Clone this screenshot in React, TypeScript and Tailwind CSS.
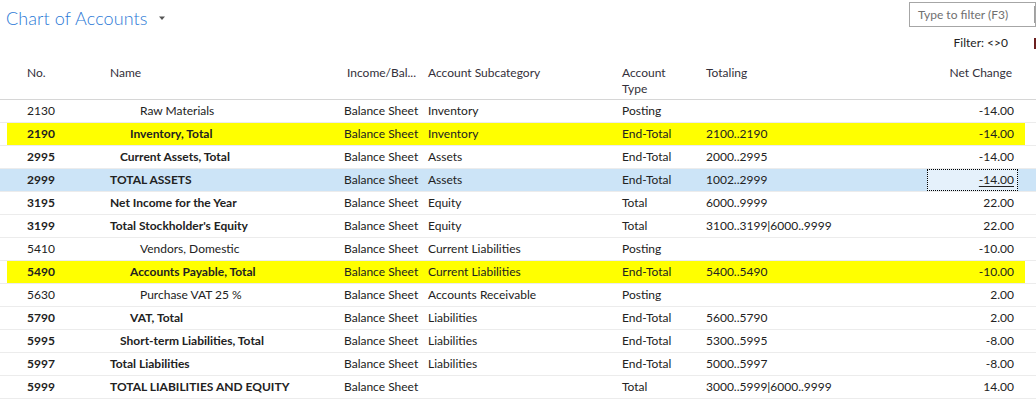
import React from "react";

type Row = {
  no: string;
  name: string;
  indent: number;
  bold: boolean;
  ib: string;
  sub: string;
  type: string;
  tot: string;
  net: string;
  hl?: "yellow" | "blue";
};

const rows: Row[] = [
  { no: "2130", name: "Raw Materials", indent: 30, bold: false, ib: "Balance Sheet", sub: "Inventory", type: "Posting", tot: "", net: "-14.00" },
  { no: "2190", name: "Inventory, Total", indent: 20, bold: true, ib: "Balance Sheet", sub: "Inventory", type: "End-Total", tot: "2100..2190", net: "-14.00", hl: "yellow" },
  { no: "2995", name: "Current Assets, Total", indent: 10, bold: true, ib: "Balance Sheet", sub: "Assets", type: "End-Total", tot: "2000..2995", net: "-14.00" },
  { no: "2999", name: "TOTAL ASSETS", indent: 0, bold: true, ib: "Balance Sheet", sub: "Assets", type: "End-Total", tot: "1002..2999", net: "-14.00", hl: "blue" },
  { no: "3195", name: "Net Income for the Year", indent: 0, bold: true, ib: "Balance Sheet", sub: "Equity", type: "Total", tot: "6000..9999", net: "22.00" },
  { no: "3199", name: "Total Stockholder's Equity", indent: 0, bold: true, ib: "Balance Sheet", sub: "Equity", type: "Total", tot: "3100..3199|6000..9999", net: "22.00" },
  { no: "5410", name: "Vendors, Domestic", indent: 30, bold: false, ib: "Balance Sheet", sub: "Current Liabilities", type: "Posting", tot: "", net: "-10.00" },
  { no: "5490", name: "Accounts Payable, Total", indent: 20, bold: true, ib: "Balance Sheet", sub: "Current Liabilities", type: "End-Total", tot: "5400..5490", net: "-10.00", hl: "yellow" },
  { no: "5630", name: "Purchase VAT 25 %", indent: 30, bold: false, ib: "Balance Sheet", sub: "Accounts Receivable", type: "Posting", tot: "", net: "2.00" },
  { no: "5790", name: "VAT, Total", indent: 20, bold: true, ib: "Balance Sheet", sub: "Liabilities", type: "End-Total", tot: "5600..5790", net: "2.00" },
  { no: "5995", name: "Short-term Liabilities, Total", indent: 10, bold: true, ib: "Balance Sheet", sub: "Liabilities", type: "End-Total", tot: "5300..5995", net: "-8.00" },
  { no: "5997", name: "Total Liabilities", indent: 0, bold: true, ib: "Balance Sheet", sub: "Liabilities", type: "End-Total", tot: "5000..5997", net: "-8.00" },
  { no: "5999", name: "TOTAL LIABILITIES AND EQUITY", indent: 0, bold: true, ib: "Balance Sheet", sub: "", type: "Total", tot: "3000..5999|6000..9999", net: "14.00" },
];

const cols = "grid grid-cols-[83px_234px_84px_194px_84px_1fr_91px] items-center";

function DataRow({ r }: { r: Row }) {
  const inner =
    r.hl === "yellow"
      ? "bg-[#ffff00] ml-[7px] mr-[11px] pl-[20px] pr-[7px]"
      : r.hl === "blue"
      ? "bg-[#cce4f7] pl-[27px] pr-[18px]"
      : "pl-[27px] pr-[18px]";
  return (
    <div className="border-b border-[#ececec]">
      <div className={`${cols} h-[22px] ${inner}`}>
        <div className={r.bold ? "font-bold" : ""}>{r.no}</div>
        <div className={`whitespace-nowrap ${r.bold ? "font-bold" : ""}`}>
          <span style={{ paddingLeft: r.indent }}>{r.name}</span>
        </div>
        <div className="whitespace-nowrap">{r.ib}</div>
        <div className="whitespace-nowrap">{r.sub}</div>
        <div className="whitespace-nowrap">{r.type}</div>
        <div className="whitespace-nowrap">{r.tot}</div>
        {r.hl === "blue" ? (
          <div className="h-[22px] border border-dotted border-black bg-[#e5f1fb] text-right pr-[3px] flex items-center justify-end">
            <span className="underline underline-offset-2">{r.net}</span>
          </div>
        ) : (
          <div className="text-right pr-[4px]">{r.net}</div>
        )}
      </div>
    </div>
  );
}

export default function App() {
  return (
    <div
      className="w-[1036px] h-[401px] overflow-hidden bg-white text-[12px] text-[#222]"
      style={{ fontFamily: "Lato, 'Open Sans', sans-serif" }}
    >
      <div className="flex items-start justify-between h-[34px]">
        <div className="flex items-center pl-[6px] pt-[4px]">
          <span className="text-[18px] font-light text-[#2b79d6] leading-[28px] tracking-[0.1px]">Chart of Accounts</span>
          <svg width="8" height="5" viewBox="0 0 8 5" className="ml-[10px] mt-[1px]">
            <path d="M1 0.5 H7 L4 4 Z" fill="#555" />
          </svg>
        </div>
        <div className="flex items-center mt-[2px] h-[25px] w-[127px] border border-[#a6a6a6] pl-[8px]">
          <span className="text-[#707070] text-[12px] flex-1">Type to filter (F3)</span>
          <div className="w-px h-[17px] bg-[#a0a0a0]" />
        </div>
      </div>
      <div className="flex items-center justify-end h-[18px] pr-[0px]">
        <span className="text-[#222]">Filter: &lt;&gt;0</span>
        <div className="ml-[26px] w-[2px] h-[11px] bg-[#6b1f1f]" />
      </div>
      <div className={`${cols} items-start pl-[27px] pr-[18px] pt-[13px] h-[48px] border-b border-[#d6d6d6] text-[#332f3a] leading-[16px]`}>
        <div>No.</div>
        <div>Name</div>
        <div className="pl-[3px]">Income/Bal...</div>
        <div>Account Subcategory</div>
        <div>
          Account
          <br />
          Type
        </div>
        <div>Totaling</div>
        <div className="text-right pr-[6px]">Net Change</div>
      </div>
      {rows.map((r) => (
        <DataRow key={r.no} r={r} />
      ))}
    </div>
  );
}
